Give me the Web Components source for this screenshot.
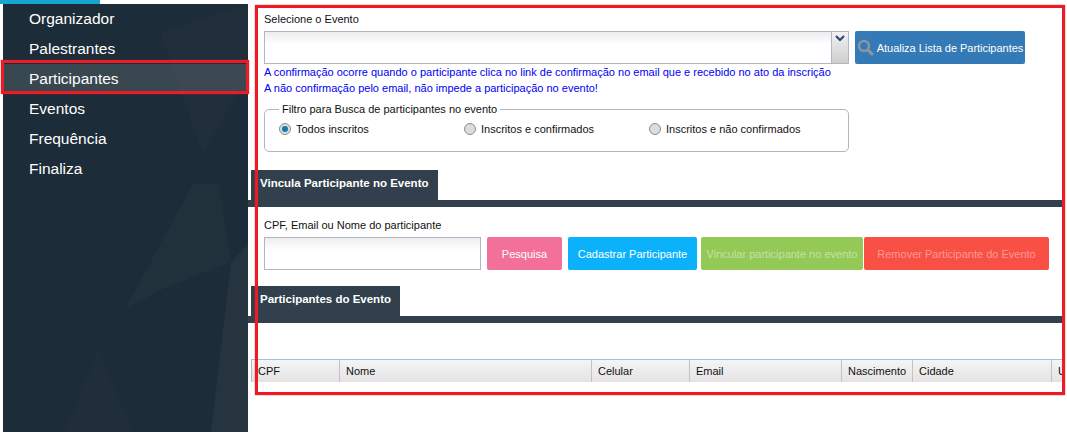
<!DOCTYPE html>
<html lang="pt">
<head>
<meta charset="utf-8">
<title>Participantes</title>
<style>
    html, body { margin: 0; padding: 0; background: #fff; }
    body { font-family: "Liberation Sans", Arial, sans-serif; font-size: 11px; color: #111; height: 432px; overflow: hidden; }
</style>
</head>
<body>
<app-shell>
    <side-menu slot="menu">
        <menu-item>Organizador</menu-item>
        <menu-item>Palestrantes</menu-item>
        <menu-item active>Participantes</menu-item>
        <menu-item>Eventos</menu-item>
        <menu-item>Frequência</menu-item>
        <menu-item>Finaliza</menu-item>
    </side-menu>
    <event-filter slot="content"></event-filter>
    <section-tab slot="content" style="margin-top:18px">Vincula Participante no Evento</section-tab>
    <participant-search slot="content"></participant-search>
    <section-tab slot="content" style="margin-top:16px;--tab-width:149px">Participantes do Evento</section-tab>
    <grid-header slot="content"></grid-header>
</app-shell>
<mark-box style="left:255px;top:5px;width:804px;height:384px"></mark-box>
<mark-box style="left:1px;top:60px;width:242px;height:28px"></mark-box>

<script>
class AppShell extends HTMLElement {
    constructor(){
        super();
        this.attachShadow({mode: 'open'});
        this.shadowRoot.innerHTML = /* html */ `
            <style>
                :host { display: block; height: 432px; }
                .strip { width: 100px; height: 4px; background: #17a6d0; }
                .row { display: flex; height: 428px; padding-left: 3px; }
                .main { width: 815px; }
            </style>
            <div class="strip"></div>
            <div class="row">
                <slot name="menu"></slot>
                <div class="main"><slot name="content"></slot></div>
            </div>
        `;
    }
}

class SideMenu extends HTMLElement {
    constructor(){
        super();
        this.attachShadow({mode: 'open'});
        this.shadowRoot.innerHTML = /* html */ `
            <style>
                :host { display: block; position: relative; width: 245px; height: 428px; background: #1c2c38; flex: none; overflow: hidden; }
                svg { position: absolute; left: 0; top: 0; }
                .items { position: relative; }
            </style>
            <svg width="245" height="428" viewBox="0 0 245 428">
                <polygon points="157,28 245,0 245,70 200,150" fill="#202f3b"/>
                <polygon points="190,180 216,180 228,258 160,285 122,305" fill="#21313c"/>
                <polygon points="228,258 245,240 245,428 208,428" fill="#25343f"/>
                <polygon points="70,410 95,345 130,428 60,428" fill="#1f2e3a"/>
            </svg>
            <div class="items"><slot></slot></div>
        `;
    }
}

class MenuItem extends HTMLElement {
    constructor(){
        super();
        this.attachShadow({mode: 'open'});
        this.shadowRoot.innerHTML = /* html */ `
            <style>
                :host { display: block; box-sizing: border-box; height: 30px; padding-left: 26px; color: #fff;
                        font: 15.5px/30px "Liberation Sans", Arial, sans-serif; }
                :host([active]) { background: rgba(255,255,255,.13); }
            </style>
            <slot></slot>
        `;
    }
}

class EventFilter extends HTMLElement {
    constructor(){
        super();
        this.attachShadow({mode: 'open'});
        this.shadowRoot.innerHTML = /* html */ `
            <style>
                :host { display: block; padding: 8px 0 0 16px; }
                label { display: block; height: 15px; line-height: 15px; }
                .pick { display: flex; gap: 6px; margin-top: 4px; }
                .select { display: flex; justify-content: flex-end; box-sizing: border-box; width: 585px; height: 33px; border: 1px solid #b4b4c4;
                          background: linear-gradient(#ecedef, #fff 12px); }
                .arrow { width: 16px; border-left: 1px solid #b4b4c4; background: linear-gradient(#f2f2f2, #cdcdcd); text-align: center; }
                .info { color: #0000f5; line-height: 16px; }
                fieldset { box-sizing: border-box; width: 585px; height: 50px; margin: 6px 0 0; padding: 0 0 0 14px;
                           border: 1px solid #b4b4c4; border-radius: 5px; display: flex; }
                legend { padding: 0 3px; margin-left: 0; line-height: 14px; }
                .opts { display: flex; padding-top: 5px; }
            </style>
            <label>Selecione o Evento</label>
            <div class="pick">
                <div class="select">
                    <div class="arrow">
                        <svg width="14" height="14" viewBox="0 0 14 14"><path d="M3 4l4 4 4-4" fill="none" stroke="#2f4474" stroke-width="2"/></svg>
                    </div>
                </div>
                <action-btn width="170" bg="#337ab7" style="gap:3px;letter-spacing:-.03px">
                    <svg slot="icon" width="17" height="17" viewBox="0 0 17 17"><circle cx="7" cy="7" r="5" fill="none" stroke="#8c979e" stroke-width="2.4"/><path d="M11 11l5 5" stroke="#8c979e" stroke-width="3"/></svg>
                    Atualiza Lista de Participantes
                </action-btn>
            </div>
            <div class="info">
                <div>A confirmação ocorre quando o participante clica no link de confirmação no email que e recebido no ato da inscrição</div>
                <div>A não confirmação pelo email, não impede a participação no evento!</div>
            </div>
            <fieldset>
                <legend>Filtro para Busca de participantes no evento</legend>
                <div class="opts">
                    <radio-option checked style="width:185px">Todos inscritos</radio-option>
                    <radio-option style="width:185px">Inscritos e confirmados</radio-option>
                    <radio-option>Inscritos e não confirmados</radio-option>
                </div>
            </fieldset>
        `;
    }
}

class RadioOption extends HTMLElement {
    constructor(){
        super();
        this.attachShadow({mode: 'open'});
        const dot = this.hasAttribute('checked')
            ? '<circle cx="6" cy="6" r="3" fill="#1478a8"/>' : '';
        this.shadowRoot.innerHTML = /* html */ `
            <style>
                :host { display: flex; align-items: center; gap: 5px; height: 16px; line-height: 16px; }
                svg { flex: none; }
            </style>
            <svg width="12" height="12" viewBox="0 0 12 12">
                <circle cx="6" cy="6" r="5.5" fill="#dcdcdc" stroke="#8d8d8d"/>
                ${dot}
            </svg>
            <span><slot></slot></span>
        `;
    }
}

class SectionTab extends HTMLElement {
    constructor(){
        super();
        this.attachShadow({mode: 'open'});
        this.shadowRoot.innerHTML = /* html */ `
            <style>
                :host { display: block; border-bottom: 7px solid #323f4d; }
                .tab { box-sizing: border-box; width: var(--tab-width, 187px); height: 30px; margin-left: 3px; padding-left: 9px;
                       background: #323f4d; color: #fff; font-weight: bold; font-size: 11.5px; line-height: 26px; }
            </style>
            <div class="tab"><slot></slot></div>
        `;
    }
}

class ParticipantSearch extends HTMLElement {
    constructor(){
        super();
        this.attachShadow({mode: 'open'});
        this.shadowRoot.innerHTML = /* html */ `
            <style>
                :host { display: block; padding: 11px 0 0 16px; }
                label { display: block; height: 15px; line-height: 15px; }
                .row { display: flex; margin-top: 4px; }
                .input { box-sizing: border-box; width: 217px; height: 33px; border: 1px solid #b4b4c4;
                         background: linear-gradient(#ecedef, #fff 12px); margin-right: 6px; }
            </style>
            <label>CPF, Email ou Nome do participante</label>
            <div class="row">
                <div class="input"></div>
                <action-btn width="75" bg="#f37199" style="margin-right:6px">Pesquisa</action-btn>
                <action-btn width="129" bg="#0cb1fb" style="margin-right:4px">Cadastrar Participante</action-btn>
                <action-btn width="162" bg="#94c857" color="#c5e2a3" style="margin-right:1px">Vincular participante no evento</action-btn>
                <action-btn width="185" bg="#f85045" color="#fb9a93">Remover Participante do Evento</action-btn>
            </div>
        `;
    }
}

class ActionBtn extends HTMLElement {
    constructor(){
        super();
        this.attachShadow({mode: 'open'});
        const w = this.getAttribute('width');
        const bg = this.getAttribute('bg');
        const color = this.getAttribute('color') || '#fff';
        this.shadowRoot.innerHTML = /* html */ `
            <style>
                :host { display: flex; align-items: center; justify-content: center; gap: 4px; box-sizing: border-box;
                        width: ${w}px; height: 33px; border-radius: 2px; background: ${bg}; color: ${color}; flex: none; white-space: nowrap; }
            </style>
            <slot name="icon"></slot><span><slot></slot></span>
        `;
    }
}

class GridHeader extends HTMLElement {
    constructor(){
        super();
        this.attachShadow({mode: 'open'});
        const cols = [['CPF',88],['Nome',252],['Celular',98],['Email',152],['Nascimento',71],['Cidade',139],['U',12]];
        const cells = cols.map(([t, w]) => `<div class="c" style="width:${w}px">${t}</div>`).join('');
        this.shadowRoot.innerHTML = /* html */ `
            <style>
                :host { display: flex; box-sizing: border-box; height: 23px; margin: 36px 0 0 3px; overflow: hidden;
                        border-top: 1px solid #a3bfe0; border-left: 1px solid #a3bfe0;
                        background: linear-gradient(#f5f5f5, #e5e3e3); line-height: 22px; }
                .c { box-sizing: border-box; flex: none; padding-left: 6px; border-right: 1px solid #c4c4c4; white-space: nowrap; overflow: hidden; }
            </style>
            ${cells}
        `;
    }
}

class MarkBox extends HTMLElement {
    constructor(){
        super();
        this.attachShadow({mode: 'open'});
        this.shadowRoot.innerHTML = /* html */ `
            <style>
                :host { display: block; position: absolute; border: 3px solid #ed1c24; box-shadow: 0 0 1px #ed1c24; pointer-events: none; }
            </style>
        `;
    }
}

customElements.define('app-shell', AppShell);
customElements.define('side-menu', SideMenu);
customElements.define('menu-item', MenuItem);
customElements.define('event-filter', EventFilter);
customElements.define('radio-option', RadioOption);
customElements.define('section-tab', SectionTab);
customElements.define('participant-search', ParticipantSearch);
customElements.define('action-btn', ActionBtn);
customElements.define('grid-header', GridHeader);
customElements.define('mark-box', MarkBox);
</script>
</body>
</html>
